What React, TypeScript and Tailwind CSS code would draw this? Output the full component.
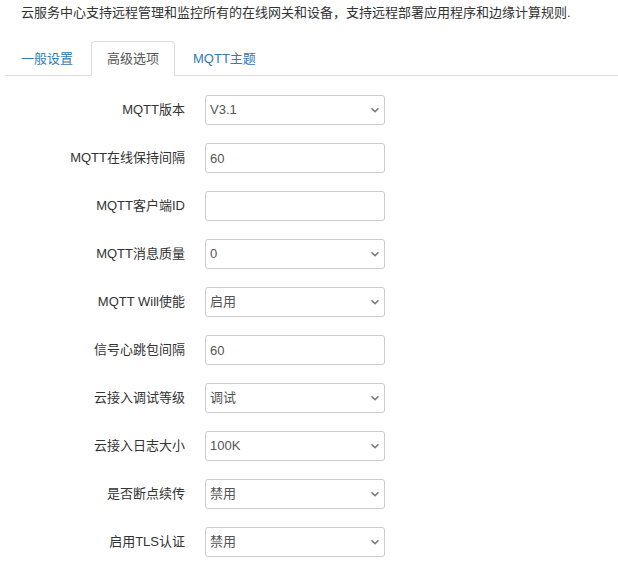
import { useState } from 'react'

type Row =
  | { label: string; kind: 'select'; value: string; options: string[] }
  | { label: string; kind: 'input'; value: string }

const rows: Row[] = [
  { label: 'MQTT版本', kind: 'select', value: 'V3.1', options: ['V3.1', 'V3.1.1'] },
  { label: 'MQTT在线保持间隔', kind: 'input', value: '60' },
  { label: 'MQTT客户端ID', kind: 'input', value: '' },
  { label: 'MQTT消息质量', kind: 'select', value: '0', options: ['0', '1', '2'] },
  { label: 'MQTT Will使能', kind: 'select', value: '启用', options: ['启用', '禁用'] },
  { label: '信号心跳包间隔', kind: 'input', value: '60' },
  { label: '云接入调试等级', kind: 'select', value: '调试', options: ['调试', '信息', '警告', '错误'] },
  { label: '云接入日志大小', kind: 'select', value: '100K', options: ['100K', '500K', '1M'] },
  { label: '是否断点续传', kind: 'select', value: '禁用', options: ['禁用', '启用'] },
  { label: '启用TLS认证', kind: 'select', value: '禁用', options: ['禁用', '启用'] },
]

const tabs = ['一般设置', '高级选项', 'MQTT主题']

function Chevron() {
  return (
    <svg
      width="10"
      height="6"
      viewBox="0 0 10 6"
      className="pointer-events-none absolute right-[5px] top-1/2 -translate-y-1/2"
    >
      <path d="M1.5 1.2 L5 4.6 L8.5 1.2" fill="none" stroke="#7a7a7a" strokeWidth="1.6" />
    </svg>
  )
}

function Field({ row }: { row: Row }) {
  const [value, setValue] = useState(row.value)
  const base =
    'h-[30px] w-full rounded-[3px] border border-[#cccccc] bg-white px-[4px] text-[13px] text-[#555555] outline-none'

  if (row.kind === 'input') {
    return <input className={base} value={value} onChange={e => setValue(e.target.value)} />
  }

  return (
    <div className="relative">
      <select className={`${base} appearance-none`} value={value} onChange={e => setValue(e.target.value)}>
        {row.options.map(o => (
          <option key={o} value={o}>
            {o}
          </option>
        ))}
      </select>
      <Chevron />
    </div>
  )
}

export default function App() {
  const [active, setActive] = useState(1)

  return (
    <div
      className="min-h-[577px] bg-white pl-[5px] text-[13px] text-[#333333]"
      style={{ fontFamily: '"Liberation Sans", Arial, "Noto Sans CJK SC", sans-serif' }}
    >
      {/* Description */}
      <p className="pl-[16px] pt-[4px] leading-[18px]">
        云服务中心支持远程管理和监控所有的在线网关和设备，支持远程部署应用程序和边缘计算规则.
      </p>

      {/* Tabs */}
      <ul className="mt-[19px] flex border-b border-[#dddddd]">
        {tabs.map((t, i) => (
          <li key={t} className="-mb-px mr-[2px]">
            <button
              type="button"
              onClick={() => setActive(i)}
              className={
                i === active
                  ? 'block rounded-t-[4px] border border-[#dddddd] border-b-white bg-white px-[15px] py-[8px] leading-[17px] text-[#555555]'
                  : 'block rounded-t-[4px] border border-transparent px-[15px] py-[8px] leading-[17px] text-[#337ab7]'
              }
            >
              {t}
            </button>
          </li>
        ))}
      </ul>

      {/* Form */}
      <div className="mt-[19px] flex flex-col gap-[18px]">
        {rows.map(r => (
          <div key={r.label} className="flex items-center">
            <label className="w-[180px] shrink-0 text-right leading-[18px] text-[#333333]">{r.label}</label>
            <div className="ml-[20px] w-[180px]">
              <Field row={r} />
            </div>
          </div>
        ))}
      </div>
    </div>
  )
}
